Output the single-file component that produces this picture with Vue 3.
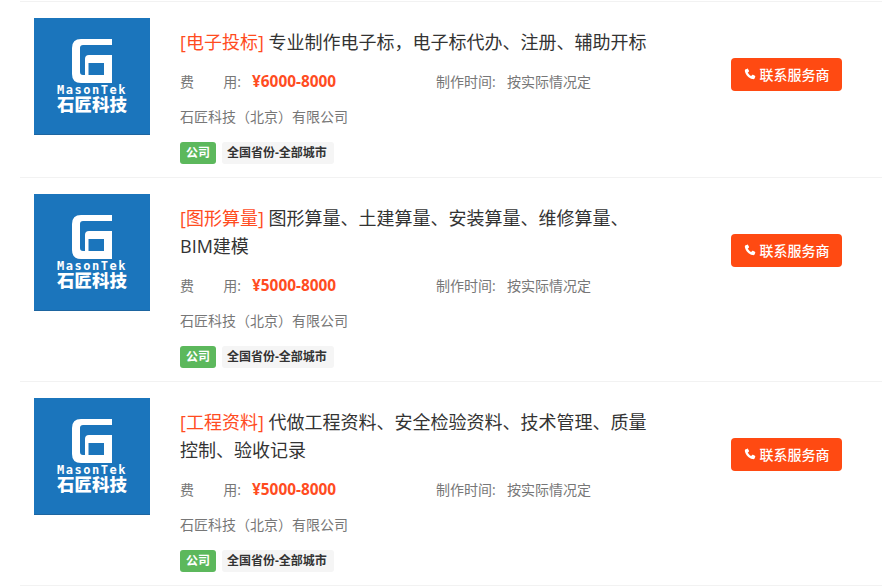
<script setup>
const items = [
  { cat: '[电子投标]', title: '专业制作电子标，电子标代办、注册、辅助开标', fee: '¥6000-8000' },
  { cat: '[图形算量]', title: '图形算量、土建算量、安装算量、维修算量、BIM建模', fee: '¥5000-8000' },
  { cat: '[工程资料]', title: '代做工程资料、安全检验资料、技术管理、质量控制、验收记录', fee: '¥5000-8000' },
]
</script>

<template>
  <div class="list">
    <div v-for="(it, i) in items" :key="i" class="row">
      <div class="logo">
        <svg class="mark" viewBox="0 0 40 44" width="40" height="44">
          <path fill="#fff" fill-rule="evenodd" d="M9 0H40V6H11Q8 6 8 9V33Q8 36 11 36H13V20Q13 16 17 16H40V44H9Q0 44 0 35V9Q0 0 9 0ZM16.500 24H32V36H16.500Z" />
        </svg>
        <div class="brand">MasonTek</div>
        <div class="brand-cn">石匠科技</div>
      </div>
      <div class="main">
        <div class="title"><span class="cat">{{ it.cat }}</span> {{ it.title }}</div>
        <div class="meta">
          <div class="fee"><span class="label"><span>费</span><span>用:</span></span><b class="price">{{ it.fee }}</b></div>
          <div class="time"><span class="time-label">制作时间:</span>按实际情况定</div>
        </div>
        <div class="company">石匠科技（北京）有限公司</div>
        <div class="tags">
          <span class="tag green">公司</span>
          <span class="tag gray">全国省份-全部城市</span>
        </div>
      </div>
      <a class="btn">
        <svg viewBox="0 0 24 24" width="12" height="12"><path fill="#fff" d="M6.600 1.500 3.400 2.600C1.800 3.300 1.500 5 1.900 7c1.500 7.300 7.800 13.600 15.100 15.100 2 .4 3.700.1 4.400-1.500l1.100-3.200c.3-.8 0-1.400-.7-1.800l-3.800-2c-.7-.4-1.300-.2-1.800.4l-1.700 2.100c-3-1.300-5.700-4-7-7l2.100-1.700c.6-.5.8-1.100.4-1.800l-2-3.800c-.4-.7-1-1-1.800-.7Z"/></svg>
        <span>联系服务商</span>
      </a>
    </div>
  </div>
</template>

<style>
html, body { margin: 0; background: #fff; overflow: hidden; }
</style>

<style scoped>
.list {
  width: 882px;
  padding-left: 20px;
  box-sizing: border-box;
  padding-top: 1px;
  font-family: "Open Sans", "Noto Sans CJK SC", sans-serif;
}
.row {
  display: flex;
  align-items: flex-start;
  padding: 16px 0 0 14px;
  border-top: 1px solid #f2f2f2;
  box-sizing: border-box;
}
.row:last-child { border-bottom: 1px solid #f2f2f2; }
.logo {
  width: 116px;
  height: 117px;
  flex: none;
  background: #1b75bc;
  border-bottom: 1px solid #1d65a0;
  box-sizing: border-box;
  display: flex;
  flex-direction: column;
  align-items: center;
  padding-top: 21px;
  color: #fff;
  overflow: hidden;
}
.mark { display: block; flex: none; margin-left: -1px; }
.brand {
  font: 700 12px/12px "DejaVu Sans Mono", monospace;
  letter-spacing: 1.550px;
  margin-top: 1px;
  height: 11px;
  white-space: nowrap;
}
.brand-cn {
  font: 900 17.500px/18px "Noto Sans CJK SC", sans-serif;
  white-space: nowrap;
}
.main {
  width: 470px;
  margin-left: 30px;
  flex: none;
  padding-bottom: 13px;
}
.title {
  font-size: 18px;
  line-height: 28px;
  color: #333;
  margin-top: 10px;
}
.cat { color: #ff4c1f; }
.meta {
  display: flex;
  margin-top: 8px;
  height: 35px;
  align-items: center;
  font-size: 14px;
  color: #777;
}
.fee { width: 256px; display: flex; align-items: center; }
.label { width: 72px; display: flex; justify-content: space-between; padding: 0 11px 2px 0; box-sizing: border-box; }
.time { padding-bottom: 2px; }
.price { color: #ff4c1f; font-size: 15.400px; font-weight: 700; font-family: "Open Sans", sans-serif; }
.time-label { display: inline-block; width: 71px; }
.company {
  font-size: 14px;
  line-height: 35px;
  color: #777;
}
.tags { display: flex; gap: 6px; margin-top: 8px; }
.tag {
  height: 22px;
  line-height: 22px;
  border-radius: 3px;
  font-size: 12px;
  font-weight: 700;
  box-sizing: border-box;
}
.green { width: 36px; background: #5cb85c; color: #fff; text-align: center; }
.gray { padding: 0 7px 0 5px; background: #f5f5f5; color: #333; }
.btn {
  margin: 40px 0 0 81px;
  padding-bottom: 1px;
  flex: none;
  width: 111px;
  height: 33px;
  border-radius: 4px;
  background: #ff4a12;
  color: #fff;
  font-size: 14px;
  font-weight: 500;
  display: flex;
  align-items: center;
  justify-content: center;
  gap: 4px;
  box-sizing: border-box;
}
</style>
